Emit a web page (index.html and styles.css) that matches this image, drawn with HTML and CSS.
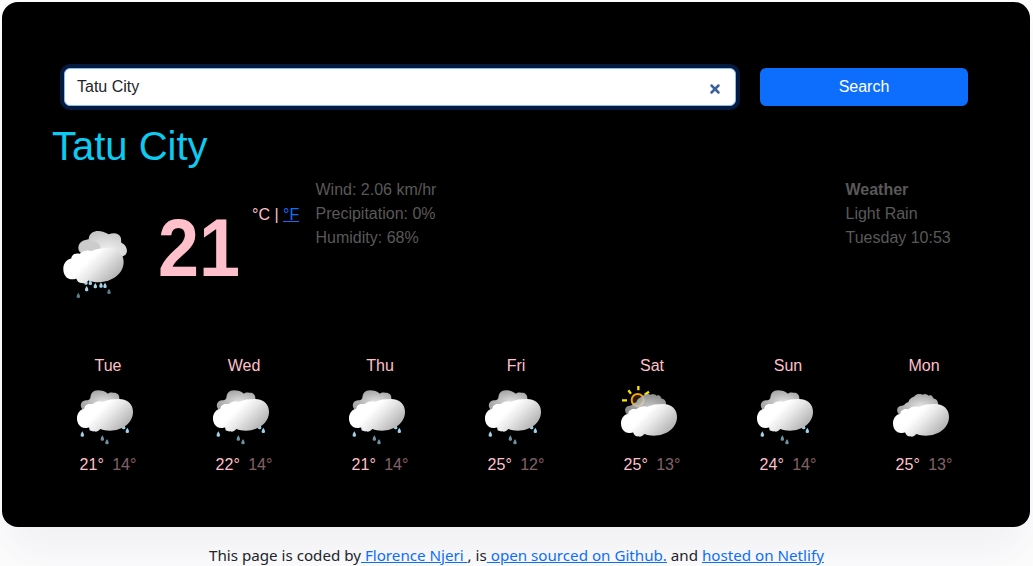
FILE: index.html
```html
<!DOCTYPE html>
<html lang="en">
<head>
<meta charset="utf-8">
<title>Weather</title>
<link rel="stylesheet" href="styles.css">
</head>
<body>
<svg class="defs" width="0" height="0" aria-hidden="true">
  <defs>
    <linearGradient id="front" gradientUnits="userSpaceOnUse" x1="95" y1="155" x2="182" y2="242"><stop offset="0.3" stop-color="#fff"/><stop offset="0.55" stop-color="#e8e8e8"/><stop offset="1" stop-color="#b4b4b4"/></linearGradient>
    <radialGradient id="back" cx="0.58" cy="0.55" r="0.55"><stop offset="0" stop-color="#e2e2e2"/><stop offset="1" stop-color="#a6a6a6"/></radialGradient>
    <radialGradient id="backLight" cx="0.6" cy="0.6" r="0.6"><stop offset="0" stop-color="#f5f5f5"/><stop offset="1" stop-color="#c6c6c6"/></radialGradient>
    <path id="drop" d="M0-8C2-4 6 0 5 5C4 9-4 9-5 5C-6 0-2-4 0-8Z"/>
    <path id="cloud" fill="url(#front)" d="M76 234C60 234 51 221 51 205C51 190 60 178 73 176C74 164 86 160 97 163C106 153 120 152 130 155C144 149 158 147 176 147C205 147 219 164 219 186C219 219 186 242 150 242C138 242 130 240 121 237C114 244 109 247 103 244C95 246 90 240 87 232C84 234 80 234 76 234Z"/>
    <path id="puff" d="M70 182C58 170 60 153 78 151C86 151 89 149 91 144C92 130 99 121 114 121C127 121 134 124 144 131C149 126 155 128 160 128C171 127 179 134 178 146L182 158L130 184Z" fill="url(#back)"/>
    <path id="lowPuff" d="M72 196C58 184 62 167 78 167C86 167 87 159 97 157C101 143 111 143 115 139C121 130 135 131 140 134C147 130 153 133 158 137C170 133 169 143 174 146C184 148 188 156 186 168L148 190Z" fill="url(#back)"/>
    <symbol id="rain" viewBox="39 102 192 192">
      <g fill="#a0d0e4"><use href="#drop" x="93" y="234"/><use href="#drop" x="191" y="230"/><use href="#drop" x="67" y="252"/><use href="#drop" x="202" y="241"/></g>
      <g fill="#6b93a3"><use href="#drop" x="127" y="264"/><use href="#drop" x="141" y="275"/></g>
      <use href="#puff"/><use href="#cloud"/>
    </symbol>
    <symbol id="cloudy" viewBox="39 102 192 192">
      <use href="#lowPuff"/><use href="#cloud" y="15"/>
    </symbol>
    <symbol id="sunny" viewBox="39 102 192 192">
      <g stroke="#f5e600" stroke-width="7"><path d="M103 108V121M73 121L81 131M135 125L122 134M54 151H69"/></g>
      <circle cx="101" cy="150" r="18" fill="#2b1a00" stroke="#f5a400" stroke-width="6"/>
      <use href="#lowPuff" opacity="0.85"/><use href="#cloud" y="15"/>
    </symbol>
    <symbol id="showers" viewBox="27 177 216 216">
      <path fill="url(#backLight)" d="M94 250C82 242 82 224 94 215C103 209 111 210 116 208C117 189 132 183 144 183C157 183 165 188 176 193C189 188 206 187 212 202C214 207 213 213 214 218C226 222 236 240 228 252C224 259 216 258 211 264L140 290Z"/>
      <ellipse cx="119" cy="232" rx="32" ry="19" fill="#ccc"/>
      <g fill="#a6d4e5"><use href="#drop" x="108" y="336"/><use href="#drop" x="121" y="337"/><use href="#drop" x="110" y="356"/><use href="#drop" x="136" y="347"/><use href="#drop" x="153" y="345"/><use href="#drop" x="165" y="346"/></g>
      <g fill="#5f7e89"><use href="#drop" x="85" y="376"/><use href="#drop" x="177" y="364"/></g>
      <use href="#cloud" transform="translate(-15 76) scale(1.077)"/>
    </symbol>
  </defs>
</svg>
<main class="card">
  <form class="search">
    <div class="field"><span>Tatu City</span>
      <svg class="clear" viewBox="0 0 12 12" width="12" height="12"><path d="M2.5 2.5L9.5 9.5M9.5 2.5L2.5 9.5"/></svg>
    </div>
    <button class="submit" type="button">Search</button>
  </form>
  <h1 class="city">Tatu City</h1>
  <section class="current">
    <svg class="current-icon"><use href="#showers"/></svg>
    <strong class="temperature">21</strong>
    <span class="units">°C | <a href="#">°F</a></span>
    <div class="details">Wind: 2.06 km/hr<br>Precipitation: 0%<br>Humidity: 68%</div>
    <div class="summary"><b>Weather</b><br>Light Rain<br>Tuesday 10:53</div>
  </section>
  <section class="forecast">
    <div class="day"><span>Tue</span><svg class="icon"><use href="#rain"/></svg><span class="temps">21° <i>14°</i></span></div>
    <div class="day"><span>Wed</span><svg class="icon"><use href="#rain"/></svg><span class="temps">22° <i>14°</i></span></div>
    <div class="day"><span>Thu</span><svg class="icon"><use href="#rain"/></svg><span class="temps">21° <i>14°</i></span></div>
    <div class="day"><span>Fri</span><svg class="icon"><use href="#rain"/></svg><span class="temps">25° <i>12°</i></span></div>
    <div class="day"><span>Sat</span><svg class="icon"><use href="#sunny"/></svg><span class="temps">25° <i>13°</i></span></div>
    <div class="day"><span>Sun</span><svg class="icon"><use href="#rain"/></svg><span class="temps">24° <i>14°</i></span></div>
    <div class="day"><span>Mon</span><svg class="icon"><use href="#cloudy"/></svg><span class="temps">25° <i>13°</i></span></div>
  </section>
</main>
<footer class="credit">This page is coded by<a href="#"> Florence Njeri </a>, is<a href="#"> open sourced on Github.</a> and <a href="#">hosted on Netlify</a></footer>
</body>
</html>
```
FILE: styles.css
```css
* { box-sizing: border-box; }
body { margin: 0; height: 566px; overflow: hidden; background: #fff; color: #212529; font: 16px/24px "Liberation Sans", Arial, sans-serif; }
a { color: #0d6efd; }
.defs { position: absolute; }
.card { width: 1028px; height: 525px; margin: 2px 0 0 2px; padding-top: 66px; border-radius: 16px; background: #000; color: pink; box-shadow: 0 30px 50px rgba(65, 50, 100, 0.08); }
.search { display: flex; gap: 24px; padding-left: 62px; }
.field { display: flex; align-items: center; justify-content: space-between; width: 672px; height: 38px; padding: 0 14.5px 0 12px; border: 1px solid #86b7fe; border-radius: 6px; background: #fff; color: #212529; box-shadow: 0 0 0 4px #031b40; }
.clear { margin-top: 3px; fill: none; stroke: #3c5f9f; stroke-width: 2.5; stroke-linecap: round; }
.submit { width: 208px; height: 38px; padding: 0; border: 0; border-radius: 6px; background: #0d6efd; color: #fff; font: inherit; }
.city { margin: 16px 0 0 50px; color: #0dcaf0; font-size: 40px; font-weight: 400; line-height: 48px; }
.current { display: flex; align-items: flex-start; height: 184px; padding: 8px 0 0 57px; }
.current-icon { width: 72px; height: 72px; margin-top: 51px; }
.temperature { width: 89px; margin: 22px 2px 0 23px; font-size: 81px; line-height: 96px; transform: scaleX(0.91); }
.units { width: 63.5px; margin: 25px 0 0 7px; white-space: nowrap; }
.details, .summary { color: #595959; }
.details { width: 530px; }
.forecast { display: flex; padding-left: 38px; }
.day { display: flex; flex-direction: column; align-items: center; width: 136px; }
.icon { width: 64px; height: 64px; margin: 6px 6px 5px 0; }
.temps { white-space: pre; }
.temps i { margin-left: 4px; font-style: normal; opacity: 0.5; }
.credit { margin: 16px 0 0 209px; font: 15.17px/24px "Noto Sans", "Open Sans", sans-serif; white-space: nowrap; }
```
